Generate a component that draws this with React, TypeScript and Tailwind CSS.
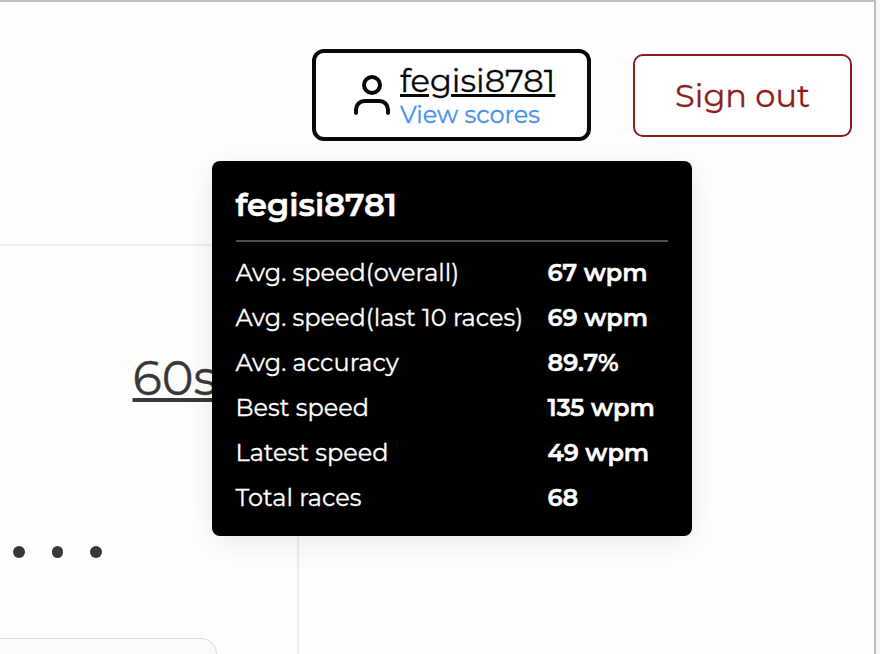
import React from 'react';

const stats = [
  { label: "Avg. speed(overall)", value: "67 wpm" },
  { label: "Avg. speed(last 10 races)", value: "69 wpm" },
  { label: "Avg. accuracy", value: "89.7%" },
  { label: "Best speed", value: "135 wpm" },
  { label: "Latest speed", value: "49 wpm" },
  { label: "Total races", value: "68" },
];

function UserIcon() {
  return (
    <svg width="36" height="41" viewBox="0 0 36 41" fill="none" stroke="#080808" strokeWidth="4" strokeLinecap="round" className="shrink-0">
      <circle cx="18" cy="10" r="8" />
      <path d="M2 38v-3.500a8.500 8.500 0 0 1 8.500-8.500h15a8.500 8.500 0 0 1 8.500 8.500v3.500" />
    </svg>
  );
}

function StatsTooltip() {
  return (
    <div className="absolute left-[212px] top-[159px] h-[375px] w-[480px] rounded-[8px] bg-black px-6 text-white shadow-[0_6px_36px_rgba(0,0,0,0.09)]">
      <div className="h-[81px] border-b-2 border-[#4d4d4d] pt-[24px] text-[32px] font-semibold leading-[40px] [-webkit-text-stroke:0.6px]">
        <span className="-ml-[0.500px]">fegisi8781</span>
      </div>
      <div className="pt-[8px]">
        {stats.map((stat) => (
          <div key={stat.label} className="flex h-[45px] items-center whitespace-nowrap text-2xl">
            <span className="-ml-[0.500px] w-[312px] shrink-0">{stat.label}</span>
            <span className="font-semibold [-webkit-text-stroke:0.5px]">{stat.value}</span>
          </div>
        ))}
      </div>
    </div>
  );
}

export default function App() {
  return (
    <div className="flex h-[654px] w-[880px] overflow-hidden bg-[#f7f7f7] font-['Montserrat','Inter',sans-serif] [-webkit-text-stroke:0.3px]">
      <div className="relative h-full w-[876px] border-r-2 border-t-2 border-[#bfbfbf] bg-[#fefefe]">
        <header className="flex h-[242px] items-start justify-end pr-[22px]">
          <div className="mt-[47px] flex h-[92px] w-[279px] rounded-[12px] border-4 border-[#080808] bg-white pl-[38px]">
            <div className="mt-[22px]">
              <UserIcon />
            </div>
            <div className="ml-[10px] whitespace-nowrap pt-[10px]">
              <div className="h-[36px] text-[32px] leading-[36px] text-[#080808] underline decoration-[3px] underline-offset-[2px]">
                fegisi8781
              </div>
              <div className="text-2xl leading-[32px] text-[#4591f0]">View scores</div>
            </div>
          </div>
          <button className="ml-[42px] mt-[52px] h-[83px] w-[219px] whitespace-nowrap rounded-[10px] border-2 border-[#8c1d18] bg-white text-[32px] text-[#8c1d18]">
            Sign out
          </button>
        </header>

        <main className="h-[410px] w-[299px] border-r-2 border-t-2 border-[#eeeeee]">
          <div className="ml-[132.500px] flex h-[150px] items-start pt-[102px] text-5xl leading-[60px] text-[#383838]">
            <span className="underline decoration-[4px] underline-offset-[3px]">60s</span>
          </div>
          <div className="ml-[13px] mt-[150px] flex gap-[27px]">
            <span className="h-[12px] w-[11.500px] rounded-full bg-[#383838]" />
            <span className="h-[12px] w-[11.500px] rounded-full bg-[#383838]" />
            <span className="h-[12px] w-[11.500px] rounded-full bg-[#383838]" />
          </div>
          <div className="mt-[80px] h-[60px] w-[217px] rounded-tr-[16px] border-r border-t border-[#dcdcdc] bg-[#fbfbfb]" />
        </main>

        <StatsTooltip />
      </div>
    </div>
  );
}
